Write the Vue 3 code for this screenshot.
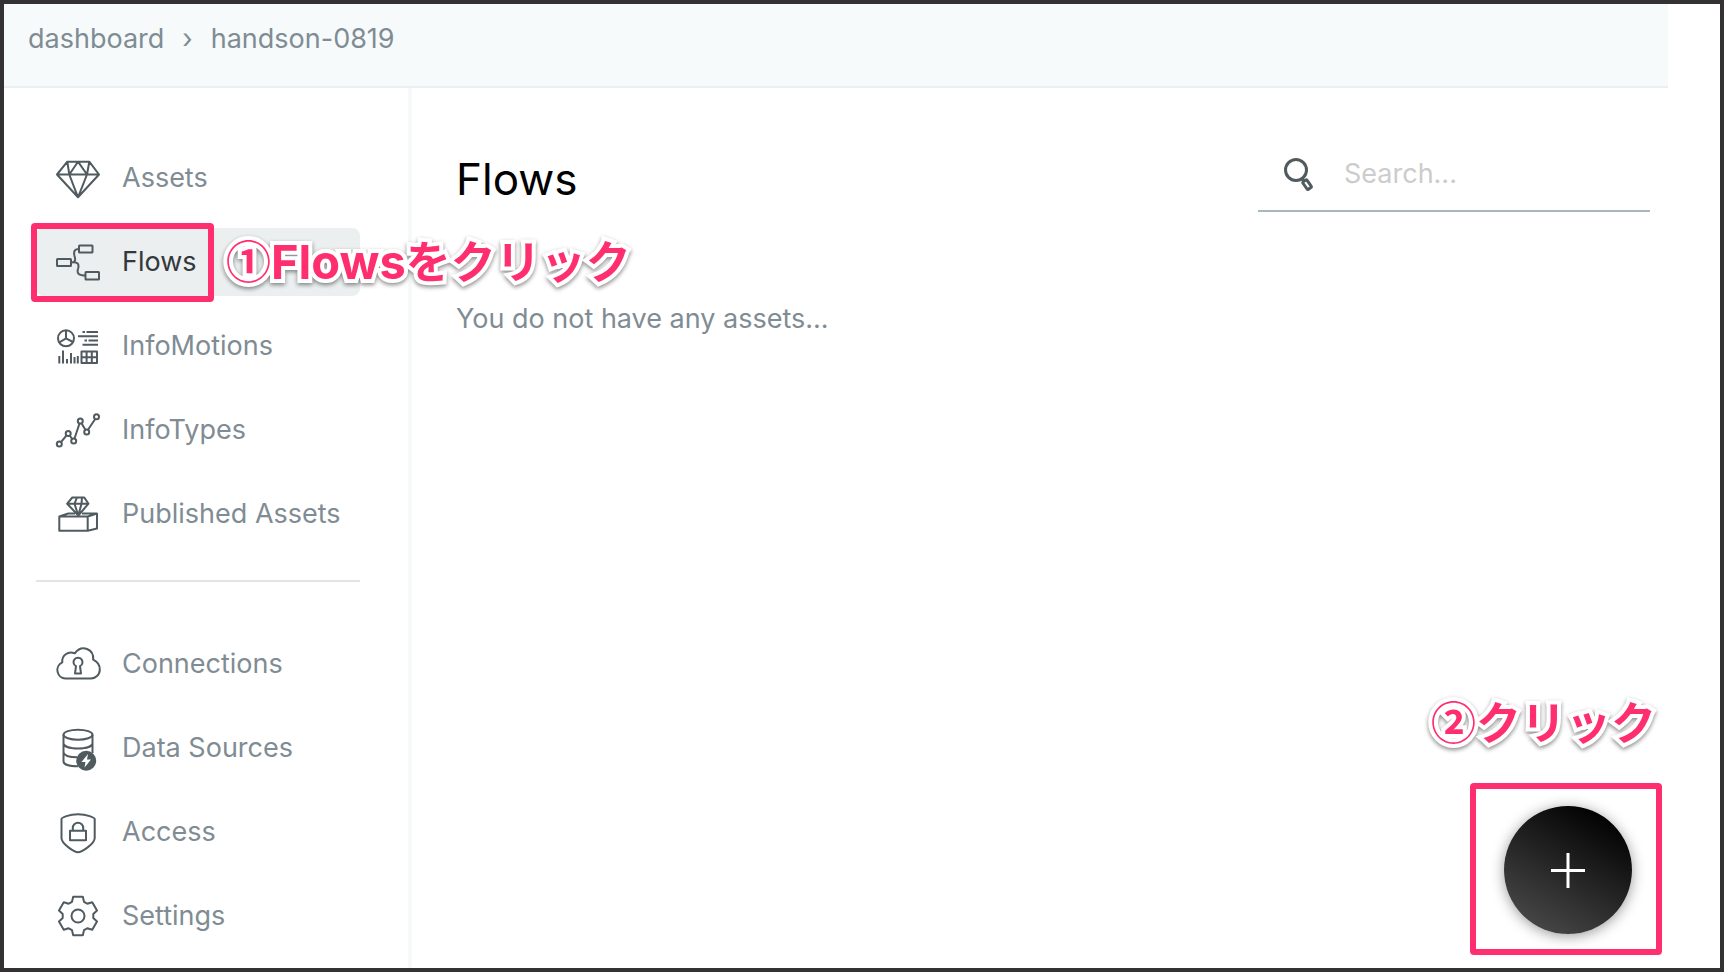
<script setup>
import { ref } from 'vue'

const query = ref('')

// Outline of the six-toothed gear, centred on (22, 22)
const gear = Array.from({ length: 6 }, (_, i) => {
  const a = (i * Math.PI) / 3
  return [[-6, -14.2], [-4.8, -19.2], [4.8, -19.2], [6, -14.2]]
    .map(([x, y]) => {
      const px = 22 + x * Math.cos(a) - y * Math.sin(a)
      const py = 22 + x * Math.sin(a) + y * Math.cos(a)
      return `${px.toFixed(2)},${py.toFixed(2)}`
    })
    .join(' ')
}).join(' ')
</script>

<template>
  <div class="page">
    <header class="topbar">
      <nav class="crumbs" aria-label="Breadcrumb">
        <a href="#">dashboard</a>
        <span class="sep">›</span>
        <a href="#">handson-0819</a>
      </nav>
    </header>

    <div class="body">
      <aside class="sidebar">
        <ul class="menu">
          <li>
            <a class="item" href="#">
              <svg class="icon" viewBox="0 0 44 44" aria-hidden="true">
                <path d="M11.3 5.7H33.3L43 18.5 22 41.3 1 18.5ZM1 18.5H43M11.3 5.7 13.3 18.5 22 5.7 31 18.5 33.3 5.7M13.3 18.5 22 41.3 31 18.5" />
              </svg>
              <span>Assets</span>
            </a>
          </li>
          <li class="marked">
            <a class="item active" href="#" aria-current="page">
              <svg class="icon" viewBox="0 0 44 44" aria-hidden="true">
                <rect x="1" y="19" width="14" height="7" rx="0.5" />
                <rect x="23" y="5.5" width="13.5" height="7" rx="0.5" />
                <rect x="29.5" y="32" width="13.5" height="7.5" rx="0.5" />
                <path d="M15 22.5C20 22.5 19.5 19.5 18.5 16C17.5 12 18 9 23 9M15 22.5C22 21.5 23.5 24 22 29C20.5 33.5 23 35.5 29.5 35.5" />
              </svg>
              <span>Flows</span>
            </a>
            <div class="frame frame-nav"></div>
            <p class="note note-nav">①<span class="latin">Flows</span>をクリック</p>
          </li>
          <li>
            <a class="item" href="#">
              <svg class="icon" viewBox="0 0 44 44" aria-hidden="true">
                <circle cx="10" cy="14.3" r="8" />
                <path d="M10 6.3V14.3L3.2 18.5M10 14.3 17 18" />
                <path d="M26.5 8H29M30.5 8H42M22 12.3H42M28.5 16.5H31M32.5 16.5H42M26.5 20.7H42" />
                <path d="M3.3 32V39.5M7 26.5V39.5M11 35V39.5M15 29V39.5M18.5 33V39.5M21.8 32V39.5" />
                <path d="M25.5 27.5H41V39H25.5ZM25.5 33.2H41M30.6 27.5V39M35.8 27.5V39" />
              </svg>
              <span>InfoMotions</span>
            </a>
          </li>
          <li>
            <a class="item" href="#">
              <svg class="icon" viewBox="0 0 44 44" aria-hidden="true">
                <circle cx="3.3" cy="36" r="2.5" />
                <circle cx="12.2" cy="25.5" r="2.5" />
                <circle cx="17.7" cy="33" r="2.5" />
                <circle cx="24.3" cy="13" r="2.5" />
                <circle cx="30.7" cy="24" r="2.5" />
                <circle cx="40.5" cy="8.7" r="2.5" />
                <path d="M5 34.2 10.5 27.3M13.7 27.5 16.2 31M18.5 30.5 23.5 15.5M25.5 15.2 29.4 21.7M32 21.7 39.2 11" />
              </svg>
              <span>InfoTypes</span>
            </a>
          </li>
          <li>
            <a class="item" href="#">
              <svg class="icon" viewBox="0 0 44 44" aria-hidden="true">
                <path d="M3.3 24.5H31.7V38.7H3.3ZM3.3 24.5 12.3 21.5H19M31.7 24.5 41 21.5H26M41 21.5V36.5L31.7 38.7" />
                <path d="M16.3 5.5H28.3L32.5 11.7 22.3 23.5 11.2 11.7ZM11.2 11.7H32.5M22.3 23.5 18.5 11.7 21 5.5M26 5.5 25.5 11.7 22.3 23.5" />
              </svg>
              <span>Published Assets</span>
            </a>
          </li>
        </ul>

        <hr class="rule" />

        <ul class="menu">
          <li>
            <a class="item" href="#">
              <svg class="icon" viewBox="0 0 44 44" aria-hidden="true">
                <path d="M9.5 36.5A8.5 8.5 0 0 1 6.3 20.3C5.5 13.5 12 8.5 18.8 11.3C26 2 38 7 37.2 17.7C41 19.5 43.8 23 43.8 27.5C43.8 33 39.5 36.5 35 36.5Z" />
                <path d="M20 24.2A4.5 4.5 0 1 1 24 24.2L25 31.5H19Z" />
              </svg>
              <span>Connections</span>
            </a>
          </li>
          <li>
            <a class="item" href="#">
              <svg class="icon" viewBox="0 0 44 44" aria-hidden="true">
                <ellipse cx="22" cy="8.7" rx="14.5" ry="5" />
                <path d="M7.5 8.7V35.5C7.5 38.2 13 40.3 22 40.3M36.5 8.7V27M7.5 17.5C8.5 24 35.5 24 36.5 17.5M7.5 26.5C8.5 30 14 31.3 21 31.3" />
                <circle class="solid" cx="30.2" cy="34.7" r="9" />
                <path class="bolt" d="M32 28 25.5 36H29.5L28.5 41.5 35 33.5H31Z" />
              </svg>
              <span>Data Sources</span>
            </a>
          </li>
          <li>
            <a class="item" href="#">
              <svg class="icon" viewBox="0 0 44 44" aria-hidden="true">
                <path d="M5.5 9C5.5 7.5 13 4.3 22 4.3S38.7 7.5 38.7 9V28C38.7 34 25.5 42.3 22 42.3S5.5 34 5.5 28Z" />
                <path d="M14 20.8H30V30.2H14ZM16.8 20.8V18A5.2 5.2 0 0 1 27.2 18V20.8" />
              </svg>
              <span>Access</span>
            </a>
          </li>
          <li>
            <a class="item" href="#">
              <svg class="icon" viewBox="0 0 44 44" aria-hidden="true">
                <polygon :points="gear" />
                <circle cx="22" cy="22" r="6.5" />
              </svg>
              <span>Settings</span>
            </a>
          </li>
        </ul>
      </aside>

      <main class="content">
        <div class="heading">
          <h1>Flows</h1>
          <label class="search">
            <svg class="lens" viewBox="0 0 36 36" aria-hidden="true">
              <circle cx="14" cy="14" r="10.5" />
              <path d="M20 22.5 22 25" />
              <rect x="-2.5" y="0" width="5" height="9" rx="1" transform="translate(22.5 25) rotate(-35)" />
            </svg>
            <input v-model="query" type="text" placeholder="Search..." aria-label="Search" />
          </label>
        </div>
        <p class="empty">You do not have any assets...</p>
      </main>
    </div>

    <div class="action">
      <p class="note note-add">②クリック</p>
      <div class="frame frame-add">
        <button class="add" type="button" aria-label="Add flow">
          <svg viewBox="0 0 34 36" aria-hidden="true"><path d="M17 1V36M0 18.5H34" /></svg>
        </button>
      </div>
    </div>
  </div>
</template>

<style>
body {
  margin: 0;
}
</style>

<style scoped>
.page {
  position: relative;
  box-sizing: border-box;
  display: flex;
  flex-direction: column;
  min-height: 100vh;
  border: 4px solid #333132;
  background: #fff;
  color: #7f8c94;
  font: 400 27px/38px Inter, "Noto Sans CJK JP", sans-serif;
}
a {
  color: inherit;
  text-decoration: none;
}
.topbar {
  box-sizing: border-box;
  height: 84px;
  margin-right: 52px;
  padding: 16px 24px;
  border-bottom: 2px solid #eaefef;
  background: #f6fafb;
}
.crumbs {
  display: flex;
  gap: 18px;
}
.body {
  flex: 1;
  display: flex;
}
.sidebar {
  box-sizing: border-box;
  width: 408px;
  flex: none;
  padding: 56px 48px 18px 32px;
  border-right: 4px solid #f5f9fa;
}
.menu {
  display: flex;
  flex-direction: column;
  gap: 16px;
  margin: 0;
  padding: 0;
  list-style: none;
}
.marked {
  position: relative;
}
.item {
  display: flex;
  align-items: center;
  gap: 22px;
  height: 68px;
  padding-left: 20px;
  border-radius: 8px;
  white-space: nowrap;
}
.active {
  background: #ebeff0;
  color: #33383b;
}
.icon {
  width: 44px;
  height: 44px;
  flex: none;
  overflow: visible;
  fill: none;
  stroke: #505b60;
  stroke-width: 2;
  stroke-linejoin: round;
}
.icon .solid {
  fill: #505b60;
}
.icon .bolt {
  fill: #fff;
  stroke: none;
}
.rule {
  height: 2px;
  margin: 32px 0 48px;
  border: 0;
  background: #e3e4e5;
}
.content {
  flex: 1;
  padding: 56px 70px 0 44px;
}
.heading {
  display: flex;
  justify-content: space-between;
  align-items: flex-start;
}
h1 {
  margin: 5px 0 0;
  color: #000;
  font-size: 44px;
  line-height: 60px;
  font-weight: 400;
}
.search {
  box-sizing: border-box;
  display: flex;
  align-items: center;
  gap: 26px;
  width: 392px;
  height: 68px;
  padding: 0 0 6px 24px;
  border-bottom: 2px solid #a9b7be;
}
.lens {
  width: 36px;
  height: 36px;
  flex: none;
  fill: none;
  stroke: #505b60;
  stroke-width: 3;
}
.search input {
  flex: 1;
  min-width: 0;
  padding: 0;
  border: 0;
  outline: 0;
  background: none;
  color: #505b60;
  font: inherit;
}
.search input::placeholder {
  color: #ccc;
  opacity: 1;
}
.empty {
  margin: 88px 0 0;
}
.frame {
  box-sizing: border-box;
  border: 6px solid #ff2e6e;
  border-radius: 4px;
}
.frame-nav {
  position: absolute;
  left: -5px;
  top: -5px;
  width: 183px;
  height: 79px;
  pointer-events: none;
}
.note {
  margin: 0;
  color: #ff2e6e;
  font: 700 45px/56px "Noto Sans CJK JP", sans-serif;
  white-space: nowrap;
  -webkit-text-stroke: 8px #fff;
  paint-order: stroke fill;
  stroke-linejoin: round;
  filter: drop-shadow(0 2px 2px rgba(0, 0, 0, 0.45));
}
.latin {
  font-family: Inter, sans-serif;
  font-size: 47px;
}
.note-nav {
  position: absolute;
  left: 190px;
  top: 4px;
  z-index: 1;
}
.action {
  position: absolute;
  right: 58px;
  bottom: 13px;
  display: flex;
  flex-direction: column;
  align-items: flex-end;
  gap: 34px;
}
.note-add {
  margin-right: 6px;
}
.frame-add {
  display: flex;
  justify-content: flex-end;
  width: 192px;
  height: 172px;
  padding: 17px 24px;
}
.add {
  display: flex;
  align-items: center;
  justify-content: center;
  width: 128px;
  height: 128px;
  padding: 0;
  border: 0;
  border-radius: 50%;
  background: linear-gradient(30deg, #484848 10%, #000 90%);
  box-shadow: 0 2px 14px rgba(0, 0, 0, 0.4);
}
.add svg {
  width: 34px;
  height: 36px;
  stroke: #fff;
  stroke-width: 3;
}
</style>
